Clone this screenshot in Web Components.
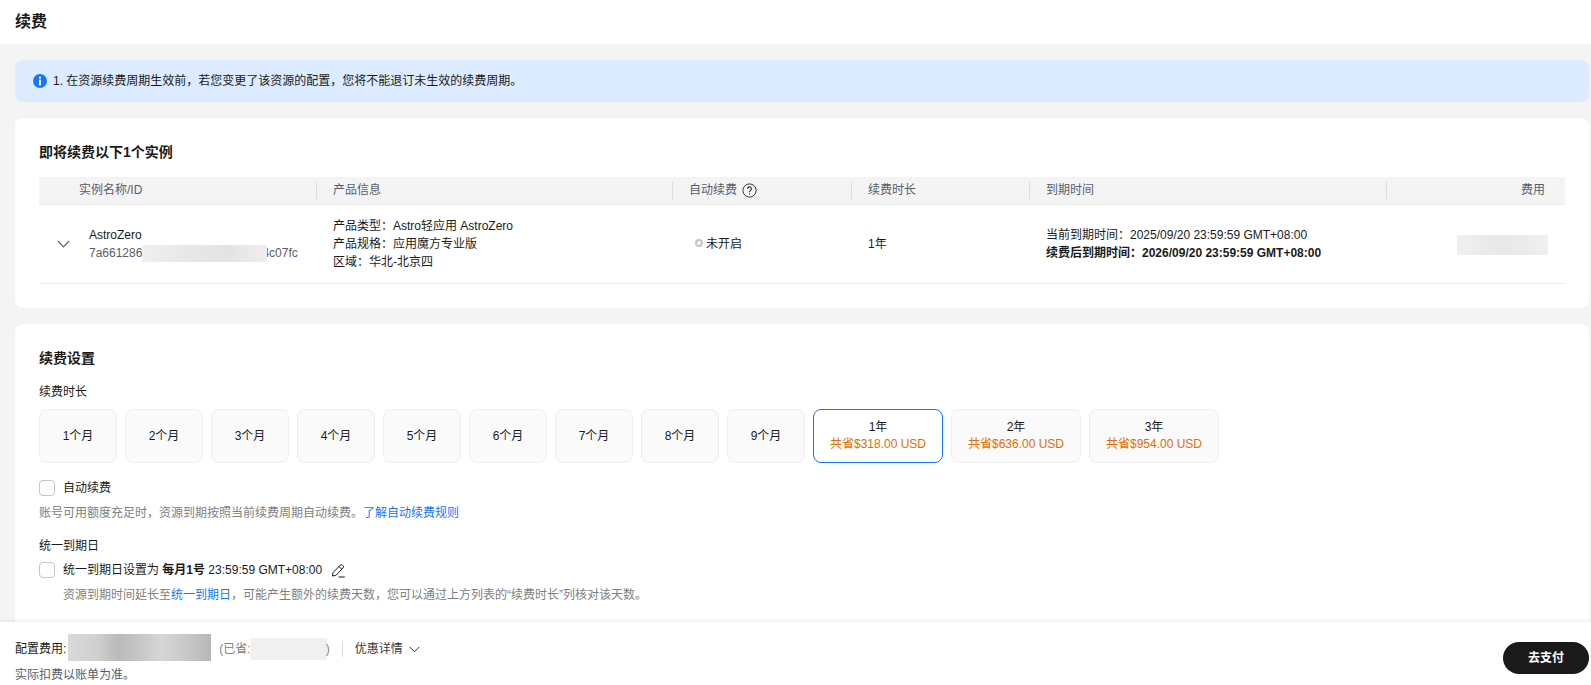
<!DOCTYPE html>
<html lang="zh-CN">
<head>
<meta charset="utf-8">
<title>续费</title>
<style>
  html, body { margin: 0; height: 100%; }
  body {
    background: #f4f4f4;
    color: #1a1a1a;
    font: 12px/18px "Liberation Sans", "Noto Sans CJK SC", sans-serif;
    overflow: hidden;
  }
  a { color: #1476ff; text-decoration: none; }
</style>
</head>
<body>
<renew-page>
  <page-header slot="header">续费</page-header>
  <info-alert>1. 在资源续费周期生效前，若您变更了该资源的配置，您将不能退订未生效的续费周期。</info-alert>
  <section-card heading="即将续费以下1个实例">
    <instance-table></instance-table>
  </section-card>
  <section-card heading="续费设置">
    <renew-settings></renew-settings>
  </section-card>
  <checkout-bar slot="footer"></checkout-bar>
</renew-page>

<script>
function define(name, html, setup) {
  const tpl = document.createElement("template");
  tpl.innerHTML = html;
  customElements.define(name, class extends HTMLElement {
    constructor() {
      super();
      this.attachShadow({ mode: "open" }).appendChild(tpl.content.cloneNode(true));
    }
    connectedCallback() {
      if (setup) setup(this);
    }
  });
}

define("renew-page", `
  <style>
    :host { display: flex; flex-direction: column; height: 100vh; }
    .main { flex: 1; min-height: 0; overflow: hidden; padding: 16px 2px 0 15px; display: flex; flex-direction: column; gap: 16px; }
    ::slotted(section-card) { flex: none; }
  </style>
  <slot name="header"></slot>
  <div class="main"><slot></slot></div>
  <slot name="footer"></slot>
`);

define("page-header", `
  <style>
    :host { display: flex; align-items: center; flex: none; height: 44px; padding: 0 0 0 15px; box-sizing: border-box; background: #fff; font-size: 16px; font-weight: 700; }
  </style>
  <slot></slot>
`);

define("info-alert", `
  <style>
    :host { display: flex; align-items: center; flex: none; gap: 6px; height: 42px; padding: 0 18px; background: #dcebff; border-radius: 8px; }
    svg { flex: none; width: 14px; height: 14px; }
  </style>
  <svg viewBox="0 0 14 14"><circle cx="7" cy="7" r="7" fill="#1476ff"/><rect x="6" y="2.6" width="2" height="2" fill="#fff"/><rect x="6" y="5.6" width="2" height="5.8" fill="#fff"/></svg>
  <span><slot></slot></span>
`);

define("section-card", `
  <style>
    :host { display: block; background: #fff; border-radius: 8px; padding: 24px 24px 24px; }
    h2 { margin: 0; font-size: 14px; line-height: 20px; font-weight: 700; }
  </style>
  <h2></h2>
  <slot></slot>
`, (el) => {
  el.shadowRoot.querySelector("h2").textContent = el.getAttribute("heading");
});

define("instance-table", `
  <style>
    :host { display: block; margin-top: 15px; --cols: 277px 356px 179px 178px 357px 179px; }
    .head, .row { display: grid; grid-template-columns: var(--cols); }
    .head { height: 28px; box-sizing: border-box; background: #f4f4f4; border-bottom: 1px solid #ebebeb; color: #575d6c; }
    .head > div { display: flex; align-items: center; gap: 5px; padding-left: 16px; margin: 5px 0; line-height: 17px; border-left: 1px solid #dcdcdc; }
    .head > div:first-child { border-left: 0; padding-left: 40px; }
    .head > div:last-child { justify-content: flex-end; padding: 0 20px 0 0; }
    .row { height: 79px; box-sizing: border-box; border-bottom: 1px solid #ebebeb; align-items: center; }
    .row > div { padding-left: 17px; }
    .name { display: flex; align-items: center; padding-left: 18px !important; }
    .name svg { flex: none; width: 13px; height: 8px; margin-right: 19px; margin-top: 1px; }
    .id { color: #575d6c; white-space: nowrap; }
    .mask { display: inline-block; position: relative; width: 125px; height: 17px; margin-right: -5px; vertical-align: middle; background: linear-gradient(90deg, #efefef, #e6e6e6 45%, #e4e4e4 70%, #eeeeee); }
    .status { display: flex; align-items: center; gap: 3px; }
    .status i { width: 4px; height: 4px; margin: -3px 0 0 6px; border: 2px solid #c4c4c4; border-radius: 50%; }
    .strong { font-weight: 700; }
    .fee { width: 91px; height: 20px; margin: 2px 0 0 71px; background: linear-gradient(90deg, #f0f0f0, #e8e8e8 45%, #ebebeb 75%, #f0f0f0); }
    .fee-cell { padding: 0 !important; }
  </style>
  <div class="head">
    <div>实例名称/ID</div>
    <div>产品信息</div>
    <div>自动续费
      <svg width="15" height="15" viewBox="0 0 15 15" fill="none" stroke="#33373f"><circle cx="7.5" cy="7.5" r="6.6"/><path d="M5.5 5.9a2 2 0 1 1 3 1.7c-.7.4-1 .8-1 1.6" stroke-width="1.1"/><path d="M7.5 10.4v1.2" stroke-width="1.1"/></svg>
    </div>
    <div>续费时长</div>
    <div>到期时间</div>
    <div>费用</div>
  </div>
  <div class="row">
    <div class="name">
      <svg viewBox="0 0 13 8" fill="none" stroke="#575d6c" stroke-width="1.2"><path d="M.8.8 6.5 6.8 12.2.8"/></svg>
      <div>
        <div>AstroZero</div>
        <div class="id">7a661286<span class="mask"></span>4c07fc</div>
      </div>
    </div>
    <div>
      <div>产品类型：Astro轻应用 AstroZero</div>
      <div>产品规格：应用魔方专业版</div>
      <div>区域：华北-北京四</div>
    </div>
    <div class="status"><i></i>未开启</div>
    <div>1年</div>
    <div>
      <div>当前到期时间：2025/09/20 23:59:59 GMT+08:00</div>
      <div class="strong">续费后到期时间：2026/09/20 23:59:59 GMT+08:00</div>
    </div>
    <div class="fee-cell"><div class="fee"></div></div>
  </div>
`);

define("duration-option", `
  <style>
    :host { display: flex; flex-direction: column; align-items: center; justify-content: center; flex: none; box-sizing: border-box; width: 78px; height: 54px; background: #fafafa; border: 1px solid #eeeeee; border-radius: 8px; line-height: 17px; }
    :host([wide]) { width: 130px; }
    :host([selected]) { background: #fff; border-color: #1476ff; }
    .save { color: #e36d00; white-space: nowrap; }
    .save:empty { display: none; }
  </style>
  <div><slot></slot></div>
  <div class="save"></div>
`, (el) => {
  el.shadowRoot.querySelector(".save").textContent = el.getAttribute("saving") || "";
});

define("check-row", `
  <style>
    :host { display: flex; align-items: center; gap: 8px; height: 16px; }
    i { flex: none; width: 14px; height: 14px; background: #fff; border: 1px solid #c4c4c4; border-radius: 4px; }
  </style>
  <i></i>
  <span><slot></slot></span>
`);

define("renew-settings", `
  <style>
    :host { display: block; }
    .label { margin-top: 15px; line-height: 18px; }
    .options { display: flex; gap: 8px; margin-top: 8px; }
    check-row { margin-top: 17px; }
    check-row.second { margin-top: 7px; }
    .help { margin-top: 8px; color: #808080; }
    .help.indent { padding-left: 24px; }
    a { color: #1476ff; text-decoration: none; }
    b { font-weight: 700; }
    .edit { width: 15px; height: 15px; margin-left: 6px; vertical-align: -4px; }
  </style>
  <div class="label">续费时长</div>
  <div class="options">
    <duration-option>1个月</duration-option>
    <duration-option>2个月</duration-option>
    <duration-option>3个月</duration-option>
    <duration-option>4个月</duration-option>
    <duration-option>5个月</duration-option>
    <duration-option>6个月</duration-option>
    <duration-option>7个月</duration-option>
    <duration-option>8个月</duration-option>
    <duration-option>9个月</duration-option>
    <duration-option wide selected saving="共省$318.00 USD">1年</duration-option>
    <duration-option wide saving="共省$636.00 USD">2年</duration-option>
    <duration-option wide saving="共省$954.00 USD">3年</duration-option>
  </div>
  <check-row>自动续费</check-row>
  <div class="help">账号可用额度充足时，资源到期按照当前续费周期自动续费。<a href="#">了解自动续费规则</a></div>
  <div class="label">统一到期日</div>
  <check-row class="second">统一到期日设置为 <b>每月1号</b> 23:59:59 GMT+08:00
    <svg class="edit" viewBox="0 0 15 15" fill="none" stroke="#1a1a1a" stroke-width="1"><path d="M1.5 13 2 9.6 9.2 2.2a1.6 1.6 0 0 1 2.3 0l.5.5a1.6 1.6 0 0 1 0 2.3L4.8 12.4 1.5 13Z"/><path d="M8 3.6l2.9 2.8"/><path d="M7.5 14h6.3"/></svg>
  </check-row>
  <div class="help indent">资源到期时间延长至<a href="#">统一到期日</a>，可能产生额外的续费天数，您可以通过上方列表的“续费时长”列核对该天数。</div>
`);

define("checkout-bar", `
  <style>
    :host { display: flex; flex: none; justify-content: space-between; align-items: flex-start; height: 63px; box-sizing: border-box; padding: 12px 2px 0 15px; background: #fff; box-shadow: 0 -1px 4px rgba(0, 0, 0, .08); position: relative; }
    .price { display: flex; align-items: center; height: 30px; white-space: nowrap; }
    .total { width: 143px; height: 27px; margin: -3px 8px 0 2px; background: linear-gradient(90deg, #dadada, #d0d0d0 20%, #bababa 35%, #c6c6c6 50%, #d6d6d6 65%, #c6c6c6 85%, #b6b6b6); }
    .saved-label { color: #808080; }
    .saved { width: 76px; height: 22px; margin: -1px -1px 0 0; background: #f0f0f0; }
    .sep { width: 1px; height: 16px; margin: 0 12px; background: #dcdcdc; }
    .more { display: flex; align-items: center; gap: 6px; color: #33373f; }
    .more svg { width: 11px; height: 7px; }
    .note { margin-top: 2px; color: #575d6c; }
    .pay { flex: none; width: 86px; height: 32px; margin-top: 8px; border: 0; border-radius: 16px; padding: 0; background: #1a1a1a; color: #fff; font: 700 12px/32px "Liberation Sans", "Noto Sans CJK SC", sans-serif; }
  </style>
  <div>
    <div class="price">
      <span>配置费用:</span>
      <span class="total"></span>
      <span class="saved-label">(已省:</span>
      <span class="saved"></span>
      <span class="saved-label">)</span>
      <span class="sep"></span>
      <span class="more">优惠详情
        <svg viewBox="0 0 11 7" fill="none" stroke="#33373f"><path d="M.6.8 5.5 5.8 10.4.8"/></svg>
      </span>
    </div>
    <div class="note">实际扣费以账单为准。</div>
  </div>
  <button class="pay">去支付</button>
`);
</script>
</body>
</html>
